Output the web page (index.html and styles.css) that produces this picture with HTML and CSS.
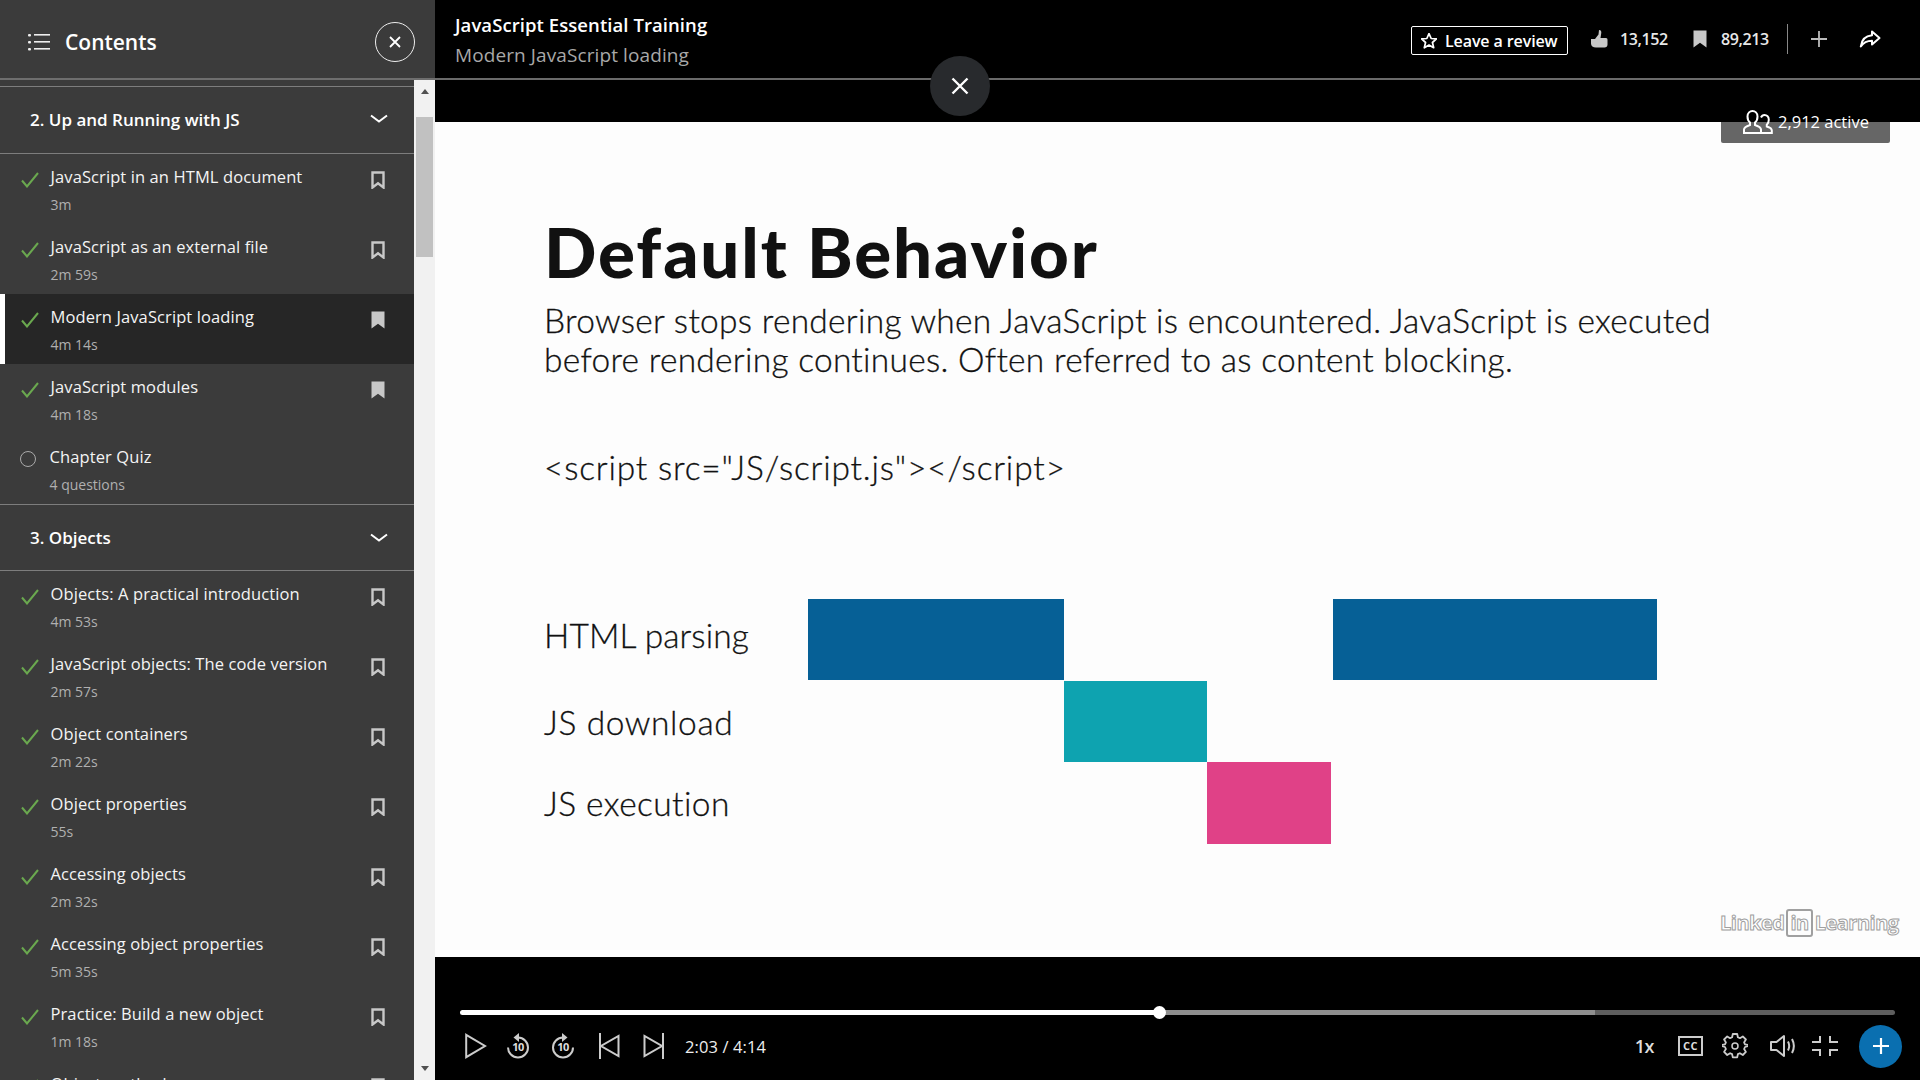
FILE: index.html
```html
<!DOCTYPE html>
<html lang="en">
<head>
<meta charset="utf-8">
<title>JavaScript Essential Training</title>
<link rel="stylesheet" href="styles.css">
</head>
<body>
<svg class="defs" width="0" height="0" aria-hidden="true">
  <symbol id="check" viewBox="0 0 18 16"><path d="M1 8.500 6 14.500 17 1" fill="none" stroke="#6aa84f" stroke-width="2"/></symbol>
  <symbol id="mark" viewBox="0 0 14 18"><path d="M1.500 1.500h11v15L7 12.200 1.500 16.500z" fill="none" stroke="#c8c8c8" stroke-width="2.400"/></symbol>
  <symbol id="markf" viewBox="0 0 14 18"><path d="M.5.500h13v17L7 12.800.5 17.500z" fill="#c8c8c8"/></symbol>
  <symbol id="chev" viewBox="0 0 18 10"><path d="M1 1.500 9 7.500 17 1.500" fill="none" stroke="#fff" stroke-width="2"/></symbol>
</svg>
<div class="app">
  <aside class="side">
    <header class="side-head">
      <svg class="list-ico" viewBox="0 0 22 18" width="22" height="18"><g fill="#eee"><rect x="0" y="1" width="3" height="2.400" rx="1"/><rect x="0" y="8" width="3" height="2.400" rx="1"/><rect x="0" y="15" width="3" height="2.400" rx="1"/><rect x="6" y="1" width="16" height="1.600"/><rect x="6" y="8" width="16" height="1.600"/><rect x="6" y="15" width="16" height="1.600"/></g></svg>
      <h2 class="side-title">Contents</h2>
      <button class="circle-close"><svg viewBox="0 0 12 12" width="12" height="12"><path d="M1 1 11 11M11 1 1 11" stroke="#fff" stroke-width="1.800"/></svg></button>
    </header>
    <div class="side-body">
      <div class="toc">
        <div class="section first"><span>2. Up and Running with JS</span><svg class="chev"><use href="#chev"/></svg></div>
        <div class="item"><svg class="check"><use href="#check"/></svg><div class="txt"><div class="name">JavaScript in an HTML document</div><div class="dur">3m</div></div><svg class="mark"><use href="#mark"/></svg></div>
        <div class="item"><svg class="check"><use href="#check"/></svg><div class="txt"><div class="name">JavaScript as an external file</div><div class="dur">2m 59s</div></div><svg class="mark"><use href="#mark"/></svg></div>
        <div class="item active"><svg class="check"><use href="#check"/></svg><div class="txt"><div class="name">Modern JavaScript loading</div><div class="dur">4m 14s</div></div><svg class="mark"><use href="#markf"/></svg></div>
        <div class="item"><svg class="check"><use href="#check"/></svg><div class="txt"><div class="name">JavaScript modules</div><div class="dur">4m 18s</div></div><svg class="mark"><use href="#markf"/></svg></div>
        <div class="item"><span class="ring"></span><div class="txt"><div class="name">Chapter Quiz</div><div class="dur">4 questions</div></div></div>
        <div class="section"><span>3. Objects</span><svg class="chev"><use href="#chev"/></svg></div>
        <div class="item"><svg class="check"><use href="#check"/></svg><div class="txt"><div class="name">Objects: A practical introduction</div><div class="dur">4m 53s</div></div><svg class="mark"><use href="#mark"/></svg></div>
        <div class="item"><svg class="check"><use href="#check"/></svg><div class="txt"><div class="name">JavaScript objects: The code version</div><div class="dur">2m 57s</div></div><svg class="mark"><use href="#mark"/></svg></div>
        <div class="item"><svg class="check"><use href="#check"/></svg><div class="txt"><div class="name">Object containers</div><div class="dur">2m 22s</div></div><svg class="mark"><use href="#mark"/></svg></div>
        <div class="item"><svg class="check"><use href="#check"/></svg><div class="txt"><div class="name">Object properties</div><div class="dur">55s</div></div><svg class="mark"><use href="#mark"/></svg></div>
        <div class="item"><svg class="check"><use href="#check"/></svg><div class="txt"><div class="name">Accessing objects</div><div class="dur">2m 32s</div></div><svg class="mark"><use href="#mark"/></svg></div>
        <div class="item"><svg class="check"><use href="#check"/></svg><div class="txt"><div class="name">Accessing object properties</div><div class="dur">5m 35s</div></div><svg class="mark"><use href="#mark"/></svg></div>
        <div class="item"><svg class="check"><use href="#check"/></svg><div class="txt"><div class="name">Practice: Build a new object</div><div class="dur">1m 18s</div></div><svg class="mark"><use href="#mark"/></svg></div>
        <div class="item"><svg class="check"><use href="#check"/></svg><div class="txt"><div class="name">Object methods</div></div><svg class="mark"><use href="#mark"/></svg></div>
      </div>
      <div class="scroll">
        <span class="arrow up"></span>
        <span class="thumb"></span>
        <span class="arrow down"></span>
      </div>
    </div>
  </aside>
  <main class="main">
    <header class="top">
      <div class="heading">
        <div class="course">JavaScript Essential Training</div>
        <div class="lesson">Modern JavaScript loading</div>
      </div>
      <div class="actions">
        <button class="review"><svg viewBox="1 1 14 14" width="16" height="16"><path d="M8 1.500 9.900 5.800 14.500 6.200 11 9.300 12.100 13.900 8 11.500 3.900 13.900 5 9.300 1.500 6.200 6.100 5.800z" fill="none" stroke="#fff" stroke-width="1.500" stroke-linejoin="round"/></svg>Leave a review</button>
        <svg class="thumb-ico" viewBox="0 0 18 20" width="18" height="20"><path d="M1 10h4l3.500-4.500L9 1c2 0 2.700 1.600 2.200 3.600L10.500 9H16c1 0 1.500.8 1.500 2v4.500c0 2-1.200 3-3 3H6c-3 0-5-1.500-5-4z" fill="#c8c8c8"/></svg>
        <span class="stat">13,152</span>
        <svg class="mark-top" viewBox="0 0 14 18" width="14" height="18"><path d="M.5.500h13v17L7 12.800.5 17.500z" fill="#c8c8c8"/></svg>
        <span class="stat">89,213</span>
        <span class="sep"></span>
        <svg class="plus-top" viewBox="0 0 16 16" width="16" height="16"><path d="M8 0v16M0 8h16" stroke="#bbb" stroke-width="1.800"/></svg>
        <svg class="share" viewBox="0 0 22 18" width="22" height="18"><path d="M13 1.500 20.500 8 13 14.500V10.800C8 10.800 4.500 12.500 1.800 16.500 2.500 10 6.500 5.800 13 5.200z" fill="none" stroke="#fff" stroke-width="2" stroke-linejoin="round"/></svg>
      </div>
    </header>
    <div class="strip"></div>
    <section class="slide">
      <h1 class="s-title">Default Behavior</h1>
      <p class="s-para">Browser stops rendering when JavaScript is encountered. JavaScript is executed<br>before rendering continues. Often referred to as content blocking.</p>
      <p class="s-code">&lt;script src="JS/script.js"&gt;&lt;/script&gt;</p>
      <div class="gantt">
        <div class="g-label l1">HTML parsing</div>
        <div class="bar blue b1"></div>
        <div class="bar blue b2"></div>
        <div class="g-label l2">JS download</div>
        <div class="bar teal"></div>
        <div class="g-label l3">JS execution</div>
        <div class="bar pink"></div>
      </div>
      <div class="logo"><span>Linked</span><span class="in">in</span><span>Learning</span></div>
    </section>
    <footer class="player">
      <div class="track">
        <div class="t-played"><span class="knob"></span></div>
        <div class="t-buffer"></div>
        <div class="t-rest"></div>
      </div>
      <div class="controls">
        <svg class="c-play" viewBox="0 0 22 26" width="22" height="26"><path d="M1.200 1.800 20 13 1.200 24.200z" fill="none" stroke="#ccc" stroke-width="2"/></svg>
        <span class="skip back"><svg viewBox="0 0 24 26" width="24" height="26"><path d="M12 4.500a10 10 0 1 1-10 10" fill="none" stroke="#ccc" stroke-width="2"/><path d="M13 0 7.500 4.500 13 9z" fill="#ccc"/></svg><b>10</b></span>
        <span class="skip fwd"><svg viewBox="0 0 24 26" width="24" height="26"><path d="M12 4.500a10 10 0 1 0 10 10" fill="none" stroke="#ccc" stroke-width="2"/><path d="M11 0 16.500 4.500 11 9z" fill="#ccc"/></svg><b>10</b></span>
        <svg class="c-prev" viewBox="0 0 22 26" width="22" height="26"><path d="M2 0v26" stroke="#ccc" stroke-width="2"/><path d="M20.500 3V23L3 13z" fill="none" stroke="#ccc" stroke-width="2"/></svg>
        <svg class="c-next" viewBox="0 0 22 26" width="22" height="26"><path d="M20 0v26" stroke="#ccc" stroke-width="2"/><path d="M1.500 3V23L19 13z" fill="none" stroke="#ccc" stroke-width="2"/></svg>
        <span class="time">2:03 / 4:14</span>
        <span class="speed">1x</span>
        <span class="cc">CC</span>
        <svg class="gear" viewBox="0 0 26 26" width="26" height="26"><path d="M10.800 1.500h4.400l.7 3.300 2 .9 2.900-1.800 3.100 3.100-1.800 2.900.9 2 3.300.7v1l-3.300.9-.9 2 1.800 2.900-3.100 3.100-2.900-1.800-2 .9-.7 3.300h-4.400l-.7-3.300-2-.9-2.900 1.800-3.100-3.100 1.800-2.900-.9-2-3.300-.9v-1l3.300-.7.9-2-1.800-2.900 3.100-3.100 2.900 1.800 2-.9z" fill="none" stroke="#ccc" stroke-width="1.800" stroke-linejoin="round" transform="translate(0 -.5)"/><circle cx="13" cy="13" r="3" fill="none" stroke="#ccc" stroke-width="1.500"/></svg>
        <svg class="speaker" viewBox="0 0 26 24" width="26" height="24"><path d="M1 8h5.500L14 2v20L6.500 16H1z" fill="none" stroke="#ccc" stroke-width="2" stroke-linejoin="round"/><path d="M18 7.500c1.500 2.800 1.500 6.200 0 9M22 5c2.300 4.300 2.300 9.700 0 14" fill="none" stroke="#ccc" stroke-width="2"/></svg>
        <svg class="shrink" viewBox="0 0 26 22" width="26" height="22"><path d="M8 1v6H0M18 1v6h8M8 21v-6H0M18 21v-6h8" fill="none" stroke="#ccc" stroke-width="2"/></svg>
        <button class="fab"><svg viewBox="0 0 18 18" width="18" height="18"><path d="M9 1v16M1 9h16" stroke="#fff" stroke-width="2.200"/></svg></button>
      </div>
    </footer>
    <button class="video-close"><svg viewBox="0 0 18 18" width="18" height="18"><path d="M1.500 1.500 16.500 16.500M16.500 1.500 1.500 16.500" stroke="#fff" stroke-width="2.400"/></svg></button>
    <div class="active-badge"><svg viewBox="0 0 30 24" width="30" height="24"><path d="M1 23v-3.500c0-2.500 3-3.500 6-4.500v-2.500C5 11 4.500 9 4.500 6.500 4.500 3 7 1 9.500 1s5 2 5 5.500c0 2.500-.5 4.500-2.500 6V15c3 1 6 2 6 4.500V23z" fill="none" stroke="#fff" stroke-width="2"/><path d="M18 7.500c.7-1.600 2-2.500 3.500-2.500 2.300 0 4.300 1.800 4.300 4.800 0 2.200-.6 3.800-2 5v1.700c2.500.7 5 1.700 5 4V23H18" fill="none" stroke="#fff" stroke-width="2"/></svg><span>2,912 active</span></div>
  </main>
</div>
</body>
</html>
```
FILE: styles.css
```css
* { box-sizing: border-box; }
html, body { margin: 0; height: 100%; overflow: hidden; }
body { font-family: "Open Sans", "Noto Sans", sans-serif; background: #000; color: #fff; }
button { font: inherit; color: inherit; padding: 0; background: none; border: 0; }
.defs { position: absolute; }
.app { display: flex; width: 1920px; height: 1080px; }

.side { width: 435px; flex: none; display: flex; flex-direction: column; background: #3b3b3b; }
.side-head { height: 80px; flex: none; display: flex; align-items: center; padding: 5px 20px 0 28px; border-bottom: 2px solid #6e6e6e; }
.list-ico { flex: none; margin-right: 15px; }
.side-title { margin: 0; flex: 1; font-size: 21px; font-weight: 600; }
.circle-close { width: 40px; height: 40px; border: 1.500px solid #eee; border-radius: 50%; display: flex; align-items: center; justify-content: center; }
.side-body { flex: 1; min-height: 0; display: flex; }
.toc { flex: 1; min-width: 0; overflow: hidden; padding-top: 6px; }
.section { height: 67px; display: flex; align-items: center; justify-content: space-between; padding: 0 26px 0 30px; border-top: 1px solid #7d7d7d; border-bottom: 1px solid #7d7d7d; font-size: 17px; font-weight: 600; }
.section.first { height: 68px; padding-bottom: 2px; }
.chev { width: 18px; height: 10px; }
.item { height: 70px; display: flex; position: relative; padding: 11px 29px 0 21px; }
.item.active { background: #262626; border-left: 5px solid #fff; padding-left: 16px; }
.check { width: 18px; height: 16px; margin-top: 7px; flex: none; }
.ring { width: 16px; height: 16px; margin: 6px 2px 0 -1px; border: 1.500px solid #aaa; border-radius: 50%; flex: none; }
.txt { flex: 1; margin-left: 11.500px; min-width: 0; }
.name { font-size: 16.500px; line-height: 23px; letter-spacing: .1px; color: #f4f4f4; white-space: nowrap; }
.dur { font-size: 14px; line-height: 20px; margin-top: 7px; color: #b0b0b0; }
.mark { width: 14px; height: 18px; margin-top: 6px; flex: none; }
.scroll { width: 21px; flex: none; background: #f1f1f1; display: flex; flex-direction: column; align-items: center; padding-top: 9px; }
.thumb { width: 17px; height: 140px; margin-top: 23px; background: #c1c1c1; }
.arrow { width: 0; height: 0; border-left: 4.500px solid transparent; border-right: 4.500px solid transparent; }
.arrow.up { border-bottom: 5px solid #505050; }
.arrow.down { border-top: 5px solid #505050; margin-top: auto; margin-bottom: 9px; }

.main { flex: 1; min-width: 0; display: flex; flex-direction: column; position: relative; background: #000; }
.top { height: 80px; flex: none; display: flex; justify-content: space-between; border-bottom: 2px solid #6a6a6a; padding: 11px 39px 0 20px; }
.course { font-size: 18.500px; font-weight: 600; line-height: 27px; letter-spacing: .07px; }
.lesson { font-size: 19px; line-height: 27px; margin-top: 4px; letter-spacing: .1px; color: #a8a8a8; }
.actions { display: flex; align-items: center; height: 40px; margin-top: 8px; }
.review { width: 157px; height: 29px; margin-top: 3px; display: flex; align-items: center; gap: 8px; padding-left: 9px; border: 1.500px solid #fff; border-radius: 2px; font-size: 16px; font-weight: 600; letter-spacing: -.1px; white-space: nowrap; }
.thumb-ico { margin: 0 12px 0 22px; }
.stat { font-size: 16px; font-weight: 600; letter-spacing: -.4px; color: #e8e8e8; width: 49px; white-space: nowrap; }
.mark-top { margin: 0 14px 0 24px; }
.sep { width: 1px; height: 30px; background: #888; margin-left: 17px; }
.plus-top { margin-left: 23px; }
.share { margin-left: 32px; }
.strip { height: 42px; flex: none; }

.slide { height: 835px; flex: none; position: relative; background: #fdfdfd; color: #111; padding: 90px 0 0 109px; font-family: Lato, "Open Sans", sans-serif; }
.s-title { margin: 0; font-size: 69px; line-height: 80px; font-weight: 900; letter-spacing: 1.900px; }
.s-para { margin: 9px 0 0; font-size: 33.500px; line-height: 39px; font-weight: 300; letter-spacing: .28px; color: #111; -webkit-text-stroke: .3px #111; white-space: nowrap; }
.s-code { margin: 68px 0 0; font-size: 33.500px; line-height: 40px; font-weight: 300; letter-spacing: .8px; color: #111; -webkit-text-stroke: .3px #111; white-space: nowrap; }
.gantt { display: grid; grid-template-columns: 264px 256px 143px 124px 2px 324px; grid-template-rows: 82px 81px 82px; margin-top: 112px; }
.g-label { font-size: 33.500px; line-height: 40px; font-weight: 300; color: #111; -webkit-text-stroke: .3px #111; white-space: nowrap; grid-column: 1; }
.l1 { grid-row: 1; margin-top: 16px; letter-spacing: .1px; }
.l2 { grid-row: 2; margin-top: 21px; letter-spacing: .6px; }
.l3 { grid-row: 3; margin-top: 21px; letter-spacing: .4px; }
.bar.blue { background: #066096; grid-row: 1; margin-bottom: 1px; }
.b1 { grid-column: 2; }
.b2 { grid-column: 6; }
.bar.teal { background: #0ea3b0; grid-row: 2; grid-column: 3; }
.bar.pink { background: #e04187; grid-row: 3; grid-column: 4; }
.logo { position: absolute; left: 1285px; top: 787px; display: flex; align-items: center; gap: 2px; font: 700 20px/24px "Open Sans", sans-serif; letter-spacing: -.5px; color: #fff; -webkit-text-stroke: 1px #a0a0a0; }
.logo .in { border: 2px solid #a0a0a0; border-radius: 3px; padding: 0 2px; }

.player { flex: 1; min-height: 0; padding: 53px 18px 0 25px; }
.track { display: flex; height: 5px; margin-right: 7px; }
.t-played { width: 699px; background: #fff; border-radius: 3px 0 0 3px; position: relative; }
.knob { position: absolute; right: -6.500px; top: -4px; width: 13px; height: 13px; border-radius: 50%; background: #fff; }
.t-buffer { width: 436px; background: #8e8e8e; }
.t-rest { flex: 1; background: #5e5e5e; border-radius: 0 3px 3px 0; }
.controls { display: flex; align-items: center; height: 42px; margin-top: 10px; }
.controls svg { flex: none; }
.c-play { margin-left: 5px; }
.skip { position: relative; width: 24px; height: 26px; display: block; flex: none; }
.skip svg { display: block; }
.skip b { position: absolute; left: 0; right: 0; top: 7px; text-align: center; font-size: 11px; line-height: 14px; font-weight: 700; letter-spacing: -.5px; color: #ddd; }
.back { margin-left: 19px; }
.fwd { margin-left: 21px; }
.c-prev { margin-left: 23px; }
.c-next { margin-left: 23px; }
.time { margin-left: 20px; font-size: 16.500px; letter-spacing: .1px; color: #eee; }
.speed { margin-left: auto; font-size: 18px; font-weight: 600; letter-spacing: -.5px; color: #ddd; }
.cc { margin-left: 24px; width: 25px; height: 20px; border: 2px solid #ccc; font-size: 11px; line-height: 16px; font-weight: 700; text-align: center; color: #ddd; letter-spacing: .5px; }
.gear { margin-left: 19px; }
.speaker { margin-left: 22px; }
.shrink { margin-left: 16px; }
.fab { width: 43px; height: 43px; margin-left: 21px; border-radius: 50%; background: #0a6fb0; display: flex; align-items: center; justify-content: center; flex: none; }

.video-close { position: absolute; left: 495px; top: 56px; width: 60px; height: 60px; border-radius: 50%; background: #282a2d; display: flex; align-items: center; justify-content: center; }
.active-badge { position: absolute; left: 1286px; top: 110px; width: 169px; height: 33px; display: flex; align-items: center; gap: 5px; padding: 0 0 10px 22px; font-size: 16.500px; background: linear-gradient(to bottom, transparent 12px, #666 12px); border-radius: 0 0 2px 2px; white-space: nowrap; }
```
